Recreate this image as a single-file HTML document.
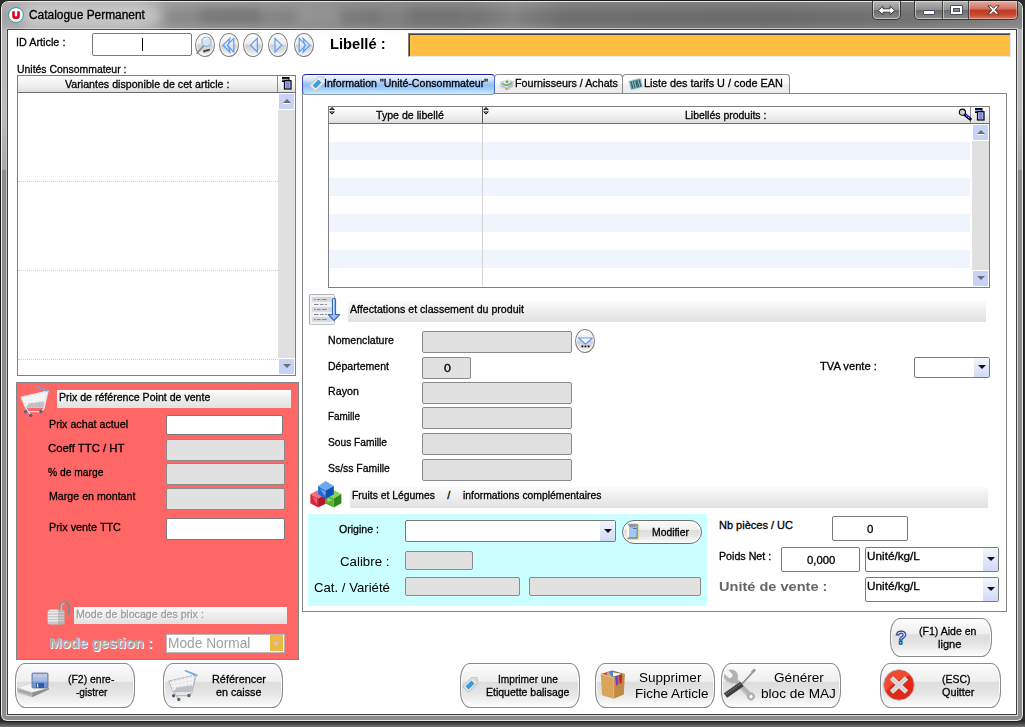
<!DOCTYPE html>
<html lang="fr">
<head>
<meta charset="utf-8">
<title>Catalogue Permanent</title>
<style>
html,body{margin:0;padding:0}
body{width:1025px;height:727px;overflow:hidden;position:relative;background:linear-gradient(#2c2c2c 0,#2c2c2c 721px,#343434 722px,#747474 727px);font-family:"Liberation Sans",sans-serif;font-size:11px;color:#000}
.a{position:absolute;box-sizing:border-box}
.t{position:absolute;white-space:nowrap;font-family:"Liberation Sans",sans-serif;font-size:11px;transform-origin:0 0;-webkit-text-stroke:.3px currentColor}
#win{left:0;top:0;width:1024px;height:722px;border:1px solid #1c1c1c;border-radius:8px 8px 7px 7px;background:#8d8d8d;box-shadow:inset 0 0 0 1px #e9e9e9}
#cap{left:2px;top:2px;width:1020px;height:27px;border-radius:6px 6px 0 0;background:linear-gradient(97deg,#a6a6a6 0,#a2a2a2 13%,#8c8c8c 17%,#848484 30%,#7a7a7a 36%,#747474 46%,#838383 50%,#6f6f6f 55%,#6b6b6b 75%,#747474 90%,#838383 100%)}
#capg{left:2px;top:2px;width:1020px;height:27px;border-radius:6px 6px 0 0;background:linear-gradient(rgba(255,255,255,.14),rgba(255,255,255,0) 45%,rgba(255,255,255,0) 70%,rgba(255,255,255,.10))}
.fl{position:absolute;top:29px;width:4px;height:141px;background:linear-gradient(#b8b8b8,#bcbcbc 60%,#a8a8a8)}
#cli{left:6px;top:28px;width:1012px;height:688px;border:1px solid #cfcfcf;border-color:#c8c8c8 #dcdcdc #dcdcdc #c8c8c8;background:#fff;box-shadow:inset 0 0 0 1px #3f3f3f}
.in{position:absolute;box-sizing:border-box;background:#e1e1e1;border:1px solid #8a8a8a;border-radius:2px}
.iw{position:absolute;box-sizing:border-box;background:#fff;border:1px solid #7a7a7a;border-radius:2px}
.bar{position:absolute;box-sizing:border-box;background:linear-gradient(#fbfbfb,#ededed 50%,#e1e1e1)}
.btn{position:absolute;box-sizing:border-box;border:1px solid #8a8a8a;border-radius:10px/16px;background:linear-gradient(#fcfcfc 0,#efefef 40%,#dddddd 43%,#e6e6e6 70%,#fdfdfd 100%);box-shadow:inset 0 0 0 1px rgba(255,255,255,.85)}
.rb{position:absolute;box-sizing:border-box;border:1px solid #7d7d7d;border-radius:50%;background:radial-gradient(ellipse at 50% 50%,rgba(255,255,255,0) 55%,rgba(0,0,0,.10) 100%),linear-gradient(#fdfdfd 0,#ececec 46%,#cdcdcd 50%,#dadada 70%,#fbfbfb 100%);box-shadow:inset 0 0 0 1px rgba(255,255,255,.9)}
.hd{position:absolute;box-sizing:border-box;background:linear-gradient(#ffffff,#f1f1f1 55%,#dedede)}
.sb{position:absolute;box-sizing:border-box;background:#e0e0e0}
.sa{position:absolute;box-sizing:border-box;background:#c6d3f7}
.cb{position:absolute;box-sizing:border-box;background:#fff;border:1px solid #7a7a7a;border-radius:2px}
.cbb{position:absolute;box-sizing:border-box;background:linear-gradient(#f4f6fd,#cfdaf6)}
.tri{position:absolute;width:0;height:0;border-left:4px solid transparent;border-right:4px solid transparent;border-top:4px solid #111}
.ln{position:absolute;background:#7f7f7f}
svg{position:absolute;overflow:visible}
</style>
</head>
<body>
<!-- window frame -->
<div id="win" class="a"></div>
<div id="cap" class="a"></div>
<div id="capg" class="a"></div>
<div class="fl" style="left:2px"></div>
<div class="fl" style="left:1018px"></div>
<div id="cli" class="a"></div>
<!-- title bar -->
<div class="a" style="left:200px;top:9px;width:60px;height:14px;background:#6c6c6c;opacity:.55;filter:blur(4px)"></div>
<div class="a" style="left:296px;top:6px;width:44px;height:20px;background:#a2a2a2;opacity:.5;filter:blur(4px)"></div>
<div class="a" style="left:408px;top:9px;width:56px;height:14px;background:#565656;opacity:.55;filter:blur(4px)"></div>
<div class="a" style="left:380px;top:4px;width:90px;height:22px;background:#909090;opacity:.35;filter:blur(5px)"></div>
<div class="a" style="left:22px;top:5px;width:140px;height:22px;border-radius:11px;background:rgba(255,255,255,.42);filter:blur(6px)"></div>
<svg style="left:8px;top:7px" width="16" height="16" viewBox="0 0 16 16"><circle cx="8" cy="8" r="7.400" fill="#fff" stroke="#2a9aa6" stroke-width="1"/><path d="M4.200 4.300h2.600v4.200c0 .8.500 1.200 1.200 1.200s1.200-.4 1.200-1.200V4.300h2.600v4.600c0 2.100-1.500 3.200-3.800 3.200s-3.800-1.100-3.800-3.200z" fill="#e2001a"/></svg>
<span class="t" style="left:28.8px;top:8px;line-height:14px;font-size:12px;transform:scaleX(0.993)">Catalogue Permanent</span>
<!-- caption buttons -->
<div class="a" style="left:872px;top:1px;width:29px;height:19px;border:1px solid #3a3a3a;border-top:none;border-radius:0 0 5px 5px;background:linear-gradient(#b6b6b6,#8f8f8f 48%,#6c6c6c 52%,#8c8c8c);box-shadow:inset 0 0 0 1px rgba(255,255,255,.5)"></div>
<svg style="left:877px;top:5px" width="19" height="11" viewBox="0 0 19 11"><path d="M1.200 5.500l4.800-4.300v2.600h7v-2.600l4.800 4.300-4.800 4.300v-2.600h-7v2.600z" fill="#fff" stroke="#3c3c3c" stroke-width="1" stroke-linejoin="round"/></svg>
<div class="a" style="left:914px;top:1px;width:104px;height:19px;border:1px solid #3a3a3a;border-top:none;border-radius:0 0 5px 5px;background:linear-gradient(#b6b6b6,#8f8f8f 48%,#6c6c6c 52%,#8c8c8c);box-shadow:inset 0 0 0 1px rgba(255,255,255,.5)"></div>
<div class="a" style="left:969px;top:1px;width:48px;height:18px;border-radius:0 0 4px 0;background:linear-gradient(#e3aca2,#d0705f 45%,#bb3b25 50%,#ca4830 78%,#de7a62);box-shadow:inset 0 0 0 1px rgba(255,255,255,.35)"></div>
<div class="a" style="left:942px;top:1px;width:1px;height:18px;background:#444"></div>
<div class="a" style="left:943px;top:1px;width:1px;height:18px;background:rgba(255,255,255,.45)"></div>
<div class="a" style="left:968px;top:1px;width:1px;height:18px;background:#444"></div>
<div class="a" style="left:923px;top:10px;width:12px;height:5px;background:#fff;border:1px solid #454c5c;border-radius:1px"></div>
<div class="a" style="left:950px;top:5px;width:13px;height:10px;background:#fff;border:1px solid #454c5c;border-radius:1px"></div>
<div class="a" style="left:953px;top:8px;width:7px;height:4px;background:#8a8a8a;border:1px solid #454c5c"></div>
<svg style="left:987px;top:5px" width="13" height="10" viewBox="0 0 13 10"><path d="M1 .8h3.200l2.300 2.500 2.300-2.500h3.200l-3.700 4.200 3.700 4.200h-3.200l-2.300-2.500-2.300 2.500h-3.200l3.700-4.200z" fill="#fff" stroke="#4a3030" stroke-width=".9" stroke-linejoin="round"/></svg>

<!-- top row -->
<span class="t" style="left:15.8px;top:36px;line-height:12px;transform:scaleX(0.986)">ID Article :</span>
<div class="iw" style="left:92px;top:33px;width:100px;height:23px"></div>
<div class="a" style="left:142px;top:38px;width:1px;height:13px;background:#000"></div>
<div class="rb" style="left:195px;top:33px;width:20px;height:24px"></div>
<div class="rb" style="left:219px;top:33px;width:20px;height:24px"></div>
<div class="rb" style="left:243px;top:33px;width:20px;height:24px"></div>
<div class="rb" style="left:268px;top:33px;width:20px;height:24px"></div>
<div class="rb" style="left:294px;top:33px;width:20px;height:24px"></div>
<svg style="left:190px;top:30px" width="130" height="30" viewBox="190 30 130 30"><g fill="rgba(235,243,254,.55)" stroke="#5a9cf4" stroke-width="1.200" stroke-linejoin="miter"><path d="M257.300 38.400 250.500 45.200 257.300 52z"/><path d="M275 38.400 281.800 45.200 275 52z"/><path d="M229.800 38.400 223.200 45.200 229.800 52 228.300 45.200z"/><path d="M233.800 38.400 227.200 45.200 233.800 52z"/><path d="M303.200 38.400 309.800 45.200 303.200 52 304.700 45.200z"/><path d="M299.200 38.400 305.800 45.200 299.200 52z"/></g><path d="M203.500 46 197.200 53.200" stroke="#8e8e8e" stroke-width="1.800" stroke-linecap="round"/><circle cx="206.500" cy="41.800" r="4.600" fill="#cfe6f6" stroke="#9fb4c4" stroke-width="1.200"/><path d="M203.500 40.500a3.200 3.200 0 0 1 4.500-2" fill="none" stroke="#f4fbff" stroke-width="1.100"/><path d="M202.800 50.500 209.500 48.800 210.300 50.300 203.800 52.300z" fill="#3a3a3a"/><path d="M203 52.800l6.500-1.800" stroke="#9a9a9a" stroke-width=".8"/></svg>
<span class="t" style="left:330.1px;top:36px;line-height:16px;font-size:14.67px;-webkit-text-stroke:0;font-weight:bold;transform:scaleX(1.004)">Libellé :</span>
<div class="a" style="left:408px;top:33px;width:603px;height:24px;background:#ffbf40;border:1px solid #7d7d7d;border-right-color:#e3e6ee;border-bottom-color:#e3e6ee;box-shadow:inset 1px 1px 0 #3d4149"></div>

<!-- left list -->
<span class="t" style="left:16.8px;top:63px;line-height:12px;transform:scaleX(0.947)">Unités Consommateur :</span>
<div class="a" style="left:17px;top:75px;width:279px;height:301px;background:#fff;border:1px solid #7f7f7f"></div>
<div class="hd" style="left:18px;top:76px;width:277px;height:16px"></div>
<div class="ln" style="left:18px;top:92px;width:277px;height:1px;background:#6e6e6e"></div>
<div class="ln" style="left:277px;top:76px;width:1px;height:16px;background:#8c8c8c"></div>
<span class="t" style="left:64.8px;top:78px;line-height:12px;transform:scaleX(0.968)">Variantes disponible de cet article :</span>
<svg style="left:280.500px;top:77px" width="11" height="13" viewBox="0 0 11 13"><rect x="1" y="0" width="7.500" height="5" fill="#000"/><rect x="1" y="1.800" width="6.500" height="1.700" fill="#8fa0f0"/><rect x="3.500" y="3.700" width="6.500" height="8.300" fill="#b8c6fb" stroke="#000" stroke-width="1.200"/><path d="M5 6h3.500M5 8h3.500M5 10h3.500" stroke="#5048c0" stroke-width="1"/></svg>
<div class="sb" style="left:278px;top:110px;width:17px;height:248px"></div>
<div class="sa" style="left:279px;top:94px;width:15px;height:15px"></div>
<div class="tri" style="left:282.500px;top:99px;border-top:none;border-bottom:4px solid #6e6e6e"></div><div class="a" style="left:283px;top:103px;width:7px;height:1px;background:#fff"></div>
<div class="sa" style="left:279px;top:359px;width:15px;height:15px"></div>
<div class="tri" style="left:282.500px;top:364px;border-top-color:#6e6e6e"></div>
<div class="a" style="left:18px;top:181px;width:260px;height:0;border-top:1px dotted #cfcfcf"></div>
<div class="a" style="left:18px;top:270px;width:260px;height:0;border-top:1px dotted #cfcfcf"></div>
<div class="a" style="left:18px;top:359px;width:260px;height:0;border-top:1px dotted #cfcfcf"></div>

<!-- red panel -->
<div class="a" style="left:16px;top:382px;width:283px;height:278px;background:#ff6666;border:1px solid #7e8787"></div>
<div class="bar" style="left:57px;top:390px;width:234px;height:18px"></div>
<span class="t" style="left:59.3px;top:391px;line-height:12px;transform:scaleX(0.963)">Prix de référence Point de vente</span>
<span class="t" style="left:49px;top:418px;line-height:12px;transform:scaleX(0.973)">Prix achat actuel</span>
<div class="iw" style="left:166px;top:415px;width:117px;height:20px"></div>
<span class="t" style="left:48.3px;top:442px;line-height:12px;transform:scaleX(1.030)">Coeff TTC / HT</span>
<div class="in" style="left:166px;top:439px;width:119px;height:22px"></div>
<span class="t" style="left:48.3px;top:466px;line-height:12px;transform:scaleX(0.934)">% de marge</span>
<div class="in" style="left:166px;top:463px;width:119px;height:22px"></div>
<span class="t" style="left:48.8px;top:490px;line-height:12px;transform:scaleX(0.968)">Marge en montant</span>
<div class="in" style="left:166px;top:488px;width:119px;height:22px"></div>
<span class="t" style="left:48.8px;top:521px;line-height:12px;transform:scaleX(0.983)">Prix vente TTC</span>
<div class="iw" style="left:166px;top:518px;width:119px;height:22px"></div>
<div class="bar" style="left:74px;top:607px;width:213px;height:17px"></div>
<span class="t" style="left:76.3px;top:608px;line-height:12px;color:#9d9d9d;transform:scaleX(0.968);text-shadow:1px 1px 0 #fff">Mode de blocage des prix :</span>
<span class="t" style="left:49.3px;top:635px;line-height:16px;font-size:14.67px;-webkit-text-stroke:0;font-weight:bold;color:#a9a9a9;text-shadow:1px 1px 0 #fff">Mode gestion :</span>
<div class="iw" style="left:166px;top:634px;width:119px;height:19px;border-color:#b9b9b9;border-radius:0"></div>
<span class="t" style="left:167.8px;top:635px;line-height:16px;font-size:14.67px;-webkit-text-stroke:0;color:#a0a0a0;transform:scaleX(0.937)">Mode Normal</span>
<div class="a" style="left:270px;top:635px;width:13px;height:16px;background:#f0b840"></div>
<div class="tri" style="left:273px;top:642px;border-top-color:#c9c9c9;border-left-width:3.500px;border-right-width:3.500px"></div>


<!-- bottom-left buttons -->
<div class="btn" style="left:15px;top:663px;width:120px;height:45px"></div>
<span class="t" style="left:68.3px;top:673px;line-height:12px;transform:scaleX(0.949)">(F2) enre-</span>
<span class="t" style="left:75.8px;top:686px;line-height:12px;transform:scaleX(0.917)">-gistrer</span>
<div class="btn" style="left:163px;top:663px;width:120px;height:45px"></div>
<span class="t" style="left:211.8px;top:673px;line-height:12px;transform:scaleX(0.990)">Référencer</span>
<span class="t" style="left:216.3px;top:686px;line-height:12px;transform:scaleX(0.977)">en caisse</span>
<!-- tabs -->
<div class="a" style="left:302px;top:93px;width:705px;height:519px;background:#fff;border:1px solid #868686"></div>
<div class="a" style="left:494px;top:74px;width:129px;height:19px;border:1px solid #8c8c8c;border-bottom:none;border-radius:4px 4px 0 0;background:linear-gradient(#ffffff,#fbfbfb 45%,#efefef 55%,#ebebeb)"></div>
<div class="a" style="left:622px;top:74px;width:168px;height:19px;border:1px solid #8c8c8c;border-bottom:none;border-radius:4px 4px 0 0;background:linear-gradient(#ffffff,#fbfbfb 45%,#efefef 55%,#ebebeb)"></div>
<div class="a" style="left:302px;top:74px;width:193px;height:21px;border:1px solid;border-color:#1c1c9a #4a6ad0 #8c99aa #3a4ac0;border-top-width:1.500px;border-radius:4px;background:linear-gradient(#f4f8ff 0,#d3e4fb 25%,#9dc4f7 47%,#92bff7 56%,#a9d2fa 78%,#c9efff 100%);box-shadow:inset 0 1px 0 rgba(255,255,255,.7)"></div>
<span class="t" style="left:324.3px;top:77px;line-height:12px;transform:scaleX(0.962)">Information "Unité-Consommateur"</span>
<span class="t" style="left:515.3px;top:77px;line-height:12px;transform:scaleX(0.973)">Fournisseurs / Achats</span>
<span class="t" style="left:643.8px;top:77px;line-height:12px;transform:scaleX(0.988)">Liste des tarifs U / code EAN</span>


<!-- grid -->
<div class="a" style="left:328px;top:106px;width:662px;height:182px;background:#fff;border:1px solid #7f7f7f"></div>
<div class="a" style="left:329px;top:142px;width:641px;height:18px;background:#f0f4fd"></div>
<div class="a" style="left:329px;top:178px;width:641px;height:18px;background:#f0f4fd"></div>
<div class="a" style="left:329px;top:214px;width:641px;height:18px;background:#f0f4fd"></div>
<div class="a" style="left:329px;top:250px;width:641px;height:18px;background:#f0f4fd"></div>
<div class="ln" style="left:482px;top:124px;width:1px;height:162px;background:#d4d4d4"></div>
<div class="hd" style="left:329px;top:107px;width:660px;height:16px"></div>
<div class="ln" style="left:329px;top:123px;width:660px;height:1px;background:#6e6e6e"></div>
<div class="ln" style="left:482px;top:107px;width:1px;height:16px;background:#5a5a5a"></div>
<div class="ln" style="left:970px;top:107px;width:1px;height:16px;background:#8c8c8c"></div>
<span class="t" style="left:376.3px;top:109px;line-height:12px;transform:scaleX(0.965)">Type de libellé</span>
<span class="t" style="left:684.8px;top:109px;line-height:12px;transform:scaleX(0.951)">Libellés produits :</span>
<div class="sb" style="left:972px;top:141px;width:17px;height:129px"></div>
<div class="sa" style="left:973px;top:125px;width:15px;height:15px"></div>
<div class="tri" style="left:976.500px;top:130px;border-top:none;border-bottom:4px solid #6e6e6e"></div><div class="a" style="left:977px;top:134px;width:7px;height:1px;background:#fff"></div>
<div class="sa" style="left:973px;top:271px;width:15px;height:15px"></div>
<div class="tri" style="left:976.500px;top:276px;border-top-color:#6e6e6e"></div>


<!-- section 1 -->
<div class="bar" style="left:348px;top:301px;width:638px;height:21px"></div>
<span class="t" style="left:349.8px;top:303px;line-height:12px;transform:scaleX(0.965)">Affectations et classement du produit</span>
<span class="t" style="left:328.1px;top:334px;line-height:12px;transform:scaleX(0.962)">Nomenclature</span>
<div class="in" style="left:422px;top:331px;width:150px;height:22px"></div>
<div class="rb" style="left:575px;top:329px;width:20px;height:24px"></div>
<span class="t" style="left:328.1px;top:360px;line-height:12px;transform:scaleX(0.958)">Département</span>
<div class="in" style="left:422px;top:357px;width:49px;height:22px"></div>
<span class="t" style="left:443.6px;top:362px;line-height:12px;transform:scaleX(1.127)">0</span>
<span class="t" style="left:328.1px;top:385px;line-height:12px;transform:scaleX(0.972)">Rayon</span>
<div class="in" style="left:422px;top:382px;width:150px;height:22px"></div>
<span class="t" style="left:328.1px;top:410px;line-height:12px;transform:scaleX(0.903)">Famille</span>
<div class="in" style="left:422px;top:407px;width:150px;height:22px"></div>
<span class="t" style="left:328.1px;top:436px;line-height:12px;transform:scaleX(0.928)">Sous Famille</span>
<div class="in" style="left:422px;top:433px;width:150px;height:22px"></div>
<span class="t" style="left:328.1px;top:462px;line-height:12px;transform:scaleX(0.946)">Ss/ss Famille</span>
<div class="in" style="left:422px;top:459px;width:150px;height:22px"></div>
<span class="t" style="left:820.3px;top:360px;line-height:12px;transform:scaleX(1.015)">TVA vente :</span>
<div class="cb" style="left:914px;top:357px;width:76px;height:21px"></div>
<div class="cbb" style="left:974px;top:358px;width:15px;height:19px"></div>
<div class="tri" style="left:978px;top:365px"></div>

<!-- section 2 -->
<div class="bar" style="left:350px;top:487px;width:638px;height:21px"></div>
<span class="t" style="left:352.1px;top:489px;line-height:12px;transform:scaleX(0.942)">Fruits et Légumes</span>
<span class="t" style="left:447.3px;top:489px;line-height:12px">/</span>
<span class="t" style="left:463.3px;top:489px;line-height:12px;transform:scaleX(0.943)">informations complémentaires</span>
<div class="a" style="left:308px;top:514px;width:399px;height:92px;background:#ccffff"></div>
<span class="t" style="left:339.3px;top:523px;line-height:12px;transform:scaleX(0.960)">Origine :</span>
<div class="cb" style="left:405px;top:520px;width:211px;height:22px"></div>
<div class="cbb" style="left:600px;top:521px;width:15px;height:20px"></div>
<div class="tri" style="left:603.500px;top:529px"></div>
<div class="btn" style="left:622px;top:520px;width:80px;height:24px;border-radius:12px;border-color:#6f6f6f"></div>
<span class="t" style="left:652.3px;top:526px;line-height:12px;transform:scaleX(0.943)">Modifier</span>
<span class="t" style="left:340.1px;top:554px;line-height:15px;font-size:13.33px;-webkit-text-stroke:0;transform:scaleX(0.995)">Calibre :</span>
<div class="in" style="left:405px;top:551px;width:68px;height:19px"></div>
<span class="t" style="left:314.1px;top:580px;line-height:15px;font-size:13.33px;-webkit-text-stroke:0;transform:scaleX(0.988)">Cat. / Variété</span>
<div class="in" style="left:405px;top:577px;width:115px;height:19px"></div>
<div class="in" style="left:529px;top:577px;width:172px;height:19px"></div>
<span class="t" style="left:719px;top:519px;line-height:12px">Nb pièces / UC</span>
<div class="iw" style="left:832px;top:516px;width:76px;height:25px"></div>
<span class="t" style="left:866.8px;top:523px;line-height:12px;transform:scaleX(1.045)">0</span>
<span class="t" style="left:719px;top:550px;line-height:12px;transform:scaleX(0.970)">Poids Net :</span>
<div class="iw" style="left:781px;top:547px;width:79px;height:25px"></div>
<span class="t" style="left:806.5px;top:554px;line-height:12px;transform:scaleX(1.032)">0,000</span>
<div class="cb" style="left:865px;top:547px;width:134px;height:25px"></div>
<div class="cbb" style="left:983px;top:548px;width:15px;height:23px"></div>
<div class="tri" style="left:986.500px;top:557px"></div>
<span class="t" style="left:867.3px;top:550px;line-height:12px;transform:scaleX(1.068)">Unité/kg/L</span>
<span class="t" style="left:719.3px;top:579px;line-height:15px;font-size:13.33px;-webkit-text-stroke:0;font-weight:bold;color:#676767;transform:scaleX(1.092)">Unité de vente :</span>
<div class="cb" style="left:865px;top:577px;width:134px;height:25px"></div>
<div class="cbb" style="left:983px;top:578px;width:15px;height:23px"></div>
<div class="tri" style="left:986.500px;top:587px"></div>
<span class="t" style="left:867.3px;top:580px;line-height:12px;transform:scaleX(1.068)">Unité/kg/L</span>

<!-- right/bottom buttons -->
<div class="btn" style="left:890px;top:618px;width:102px;height:39px"></div>
<span class="t" style="left:919.3px;top:625px;line-height:12px;transform:scaleX(0.958)">(F1) Aide en</span>
<span class="t" style="left:937.8px;top:638px;line-height:12px;transform:scaleX(1.006)">ligne</span>
<div class="btn" style="left:460px;top:663px;width:120px;height:45px"></div>
<span class="t" style="left:498.3px;top:673px;line-height:12px;transform:scaleX(0.924)">Imprimer une</span>
<span class="t" style="left:486.3px;top:686px;line-height:12px;transform:scaleX(0.954)">Etiquette balisage</span>
<div class="btn" style="left:595px;top:663px;width:120px;height:45px"></div>
<span class="t" style="left:638.8px;top:670px;line-height:15px;font-size:13.33px;-webkit-text-stroke:0;transform:scaleX(1.015)">Supprimer</span>
<span class="t" style="left:634.8px;top:686px;line-height:15px;font-size:13.33px;-webkit-text-stroke:0;transform:scaleX(1.011)">Fiche Article</span>
<div class="btn" style="left:721px;top:663px;width:120px;height:45px"></div>
<span class="t" style="left:773.8px;top:670px;line-height:15px;font-size:13.33px;-webkit-text-stroke:0;transform:scaleX(1.020)">Générer</span>
<span class="t" style="left:761.3px;top:686px;line-height:15px;font-size:13.33px;-webkit-text-stroke:0;transform:scaleX(1.021)">bloc de MAJ</span>
<div class="btn" style="left:880px;top:663px;width:121px;height:45px"></div>
<span class="t" style="left:941.6px;top:673px;line-height:12px;transform:scaleX(0.948)">(ESC)</span>
<span class="t" style="left:941.6px;top:686px;line-height:12px;transform:scaleX(0.981)">Quitter</span>
<!-- cart icon (panel) -->
<svg style="left:19px;top:384px" width="32" height="36" viewBox="0 0 32 36"><g fill="none" stroke-linecap="round" stroke-linejoin="round"><path d="M2.200 13 29 6.800 24.500 23.200 6.600 23.700z" fill="#eeeff2" stroke="#d4d7dc" stroke-width="1"/><path d="M6 12.200l3.300 11.500M10 11.300l2.600 12.300M14 10.300l2 13.300M18 9.400l1.300 13.800M22 8.500l.5 14.700M25.500 7.700l-.8 15.500M3.300 15.700l24.800-5.700M4.300 18.500l23-4.600M5.300 21.200l21-3.500" stroke="#fbfbfc" stroke-width=".8"/><path d="M9.500 19.500 25.300 17.200 24.500 23.200 6.600 23.700z" fill="#a9adb6" stroke="none" opacity=".7"/><path d="M18.500 2.800 29.800 7.400" stroke="#6aa8ea" stroke-width="1.700"/><path d="M29 7 25 24.500l-2.800 3.200M6.600 23.700l2.600 3.800 13 .2M9.200 27.500l2.400 3.500" stroke="#e4e6ea" stroke-width="1.200"/></g><circle cx="6.600" cy="27.800" r="1.700" fill="#5a6076"/><circle cx="11.800" cy="31.500" r="1.700" fill="#5a6076"/><circle cx="21.900" cy="27.500" r="1.700" fill="#5a6076"/></svg>
<!-- lock icon -->
<svg style="left:46px;top:600px" width="26" height="26" viewBox="0 0 26 26"><path d="M14.500 11V6.500a4.200 4.200 0 0 1 8.400 0V14" fill="none" stroke="#868b8d" stroke-width="2.600" stroke-linecap="round"/><path d="M15.300 10.500V6.500a3.400 3.400 0 0 1 3.400-3.400" fill="none" stroke="#d5d7d8" stroke-width=".9"/><rect x="1.500" y="9.800" width="17" height="14.800" rx="2.500" fill="#c9c9c9"/><path d="M2 12.500h16M2 15.300h16M2 18.100h16M2 20.900h16" stroke="#efefef" stroke-width="1.300"/><path d="M12 10v14.500h4a2.500 2.500 0 0 0 2.500-2.500V12.300A2.500 2.500 0 0 0 16 10z" fill="#8d8d8d" opacity=".35"/><path d="M3.500 10.300h8" stroke="#f6f6f6" stroke-width="1.200"/></svg>
<!-- floppy/drive icon -->
<svg style="left:16px;top:671px" width="36" height="28" viewBox="0 0 36 28"><path d="M1.200 16.700 16 12l17 5L16.200 21.500z" fill="#f3f3f3" stroke="#d2d2d2" stroke-width=".6"/><path d="M1.200 16.700 16.200 21.500v4.700L1.200 21.600z" fill="#bababa"/><path d="M16.200 21.500 33 17v1.600L16.200 26.200z" fill="#8f8f8f"/><path d="M3 18.600l10 3.100v1.400L3 20z" fill="#9c9c9c"/><rect x="13.600" y="22.300" width="1.200" height="1.200" fill="#58b040"/><rect x="16" y="2" width="16" height="15" rx="1" fill="#6f94d6" stroke="#6b7080" stroke-width=".8"/><rect x="16.800" y="2.800" width="14.400" height="8" fill="#b9c9ea"/><path d="M16.800 6.500h14.400v4.300h-14.400z" fill="#9db4e2" opacity=".7"/><rect x="20" y="12" width="8" height="5" fill="#2d5ba8"/><rect x="21" y="12.600" width="1.200" height="3.800" fill="#dfe8f8"/><path d="M16.800 10.800h14.400" stroke="#88a6dc" stroke-width="1"/></svg>
<!-- cart icon (button) -->
<svg style="left:166.500px;top:667.500px" width="32" height="36" viewBox="0 0 32 36"><g fill="none" stroke-linecap="round" stroke-linejoin="round"><path d="M2.200 13 29 6.800 24.500 23.200 6.600 23.700z" fill="#e6e7ea" stroke="#b4b7bd" stroke-width="1"/><path d="M6 12.200l3.300 11.500M10 11.300l2.600 12.300M14 10.300l2 13.300M18 9.400l1.300 13.800M22 8.500l.5 14.700M25.500 7.700l-.8 15.500M3.300 15.700l24.800-5.700M4.300 18.500l23-4.600M5.300 21.200l21-3.500" stroke="#fafafa" stroke-width=".8"/><path d="M9.500 19.500 25.300 17.200 24.500 23.200 6.600 23.700z" fill="#a9adb6" stroke="none" opacity=".7"/><path d="M18.500 2.800 29.800 7.400" stroke="#6aa8ea" stroke-width="1.700"/><path d="M29 7 25 24.500l-2.800 3.200M6.600 23.700l2.600 3.800 13 .2M9.200 27.500l2.400 3.500" stroke="#b9bcc2" stroke-width="1.200"/></g><circle cx="6.600" cy="27.800" r="1.700" fill="#5a6076"/><circle cx="11.800" cy="31.500" r="1.700" fill="#5a6076"/><circle cx="21.900" cy="27.500" r="1.700" fill="#5a6076"/></svg>
<!-- tab icons -->
<svg style="left:308.800px;top:71.800px" width="20" height="20" viewBox="0 0 18 18"><g transform="rotate(-45 9 9)"><path d="M1 5.500h11.500l3 3.500-3 3.500H1z" fill="#f3f3f3" stroke="#cfcfcf" stroke-width="1" stroke-linejoin="round"/><rect x="2.700" y="7" width="7.600" height="4" fill="#3aa0dc"/><circle cx="12.800" cy="9" r="1.100" fill="#fff" stroke="#bdbdbd" stroke-width=".6"/></g></svg>
<svg style="left:499px;top:78px" width="15" height="13" viewBox="0 0 15 13"><path d="M1 9.500 8 12.500 14.500 8.500V3L8 1 1 4z" fill="#e4e6ea"/><path d="M8 6.500 14.500 3v5.500L8 12.500z" fill="#c4c8cf"/><path d="M1 4l7 2.500v6L1 9.500z" fill="#dadee6"/><path d="M3 5.500c2 1.500 3.500 2 5.500 1.500s3.500-1.500 4.500-3" fill="none" stroke="#6aa84a" stroke-width="1.600" opacity=".85"/><circle cx="8" cy="3.800" r="1.300" fill="#5a9c40" opacity=".9"/><path d="M2 8l5 1.800M9.500 9.500 13.500 7.500" stroke="#8fbfea" stroke-width="1.200"/><rect x="6.700" y="10" width="1.600" height="1.600" fill="#c98a2a"/><path d="M2 3.800v3M4 3v3M12 2.500v3" stroke="#9fc6d8" stroke-width=".8"/></svg>
<svg style="left:628px;top:77px" width="15" height="14" viewBox="0 0 15 14"><g transform="rotate(-14 7.500 7)"><rect x="1.500" y="2.500" width="12.500" height="9.500" rx="1" fill="#5f9aa6" stroke="#cfe6ea" stroke-width="1"/><path d="M4 4v6.500M6 4v6.500M8.500 4v6.500M10 4v6.500M12 4v6.500" stroke="#2f5e68" stroke-width="1.100"/><path d="M5 4v6.500M7.200 4v6.500M11 4v6.500" stroke="#9cc4cc" stroke-width=".7"/></g></svg>
<!-- grid header icons -->
<svg style="left:329px;top:107px" width="6" height="8" viewBox="0 0 6 8"><path d="M3 0 6 3H0zM0 4.500h6L3 7.500z" fill="#000"/><rect x="2.500" y="1.500" width="1" height="1" fill="#fff"/><rect x="2.500" y="5" width="1" height="1" fill="#fff"/></svg>
<svg style="left:483px;top:107px" width="6" height="8" viewBox="0 0 6 8"><path d="M3 0 6 3H0zM0 4.500h6L3 7.500z" fill="#000"/><rect x="2.500" y="1.500" width="1" height="1" fill="#fff"/><rect x="2.500" y="5" width="1" height="1" fill="#fff"/></svg>
<svg style="left:958px;top:108px" width="13" height="13" viewBox="0 0 13 13"><path d="M6.500 6.500 12 11" stroke="#000" stroke-width="3" stroke-linecap="square"/><path d="M7 6 12.300 10.300" stroke="#1a1aff" stroke-width="1.800"/><path d="M8.300 7.600l.8.700M10.200 9.200l.8.700" stroke="#fff" stroke-width=".9"/><circle cx="4.400" cy="4.200" r="3.100" fill="#c9c9c9" stroke="#000" stroke-width="1.100"/><path d="M4.800 2.500 6 4.200 4.800 5.800z" fill="#efefef"/></svg>
<svg style="left:974px;top:108px" width="11" height="13" viewBox="0 0 11 13"><rect x="1" y="0" width="7.500" height="5" fill="#000"/><rect x="1" y="1.800" width="6.500" height="1.700" fill="#8fa0f0"/><rect x="3.500" y="3.700" width="6.500" height="8.300" fill="#b8c6fb" stroke="#000" stroke-width="1.200"/><path d="M5 6h3.500M5 8h3.500M5 10h3.500" stroke="#5048c0" stroke-width="1"/></svg>
<!-- section icons -->
<svg style="left:308px;top:293px" width="34" height="33" viewBox="0 0 34 33"><rect x="1.500" y="1.500" width="25" height="30" rx="1" fill="#f3f3f3" stroke="#c4c4c4" stroke-width="1"/><path d="M1.500 2v29" stroke="#a9a9a9" stroke-width="1"/><path d="M2 1.500h24" stroke="#b4b4b4" stroke-width="1"/><rect x="4" y="4" width="20" height="4.800" fill="#d3d8e3"/><rect x="4" y="14" width="20" height="4.800" fill="#d3d8e3"/><rect x="4" y="24" width="20" height="4.800" fill="#d3d8e3"/><path d="M6 6.500h1.800M9 6.500h3.600M14 6.500h4.600M6 11.500h4.600M12 11.500h3.600M17 11.500h1.800M6 16.500h1.800M9 16.500h3.600M14 16.500h4.600M6 21.500h4.600M12 21.500h3.600M17 21.500h1.800M6 26.500h1.800M9 26.500h3.600M14 26.500h4.600" stroke="#8a8a8a" stroke-width="1"/><path d="M24.500 6.800a1.500 1.500 0 0 1 3 0V21.500h4.200L26 27.500l-5.700-6h4.200z" fill="#9dc0f0" stroke="#3a6db8" stroke-width="1.200" stroke-linejoin="round"/><path d="M25.600 6v15" stroke="#d4e4fb" stroke-width="1"/></svg>
<svg style="left:308px;top:479px" width="36" height="31" viewBox="0 0 36 31"><path d="M2.300 15 10.100 10.900 17.700 15 10.100 19.500z" fill="#f0707c"/><path d="M2.300 15 10.100 19.500v9.100L2.300 24.200z" fill="#d8283c"/><path d="M10.100 19.500 17.700 15v9.700l-7.600 3.900z" fill="#b81428"/><path d="M33.400 15 25.800 10.900 17.700 15 25.800 19.500z" fill="#8cd060"/><path d="M33.400 15 25.800 19.500v9.100l7.600-4.400z" fill="#2c8a1c"/><path d="M25.800 19.500 17.700 15v9.700l8.100 3.900z" fill="#58b030"/><path d="M10.100 6.900 17.700 2 25.800 6.900 17.700 11.500z" fill="#6aaaf4"/><path d="M10.100 6.900 17.700 11.500V20L10.100 15.300z" fill="#1f6cd8"/><path d="M17.700 11.500 25.800 6.900v8.400L17.700 20z" fill="#0c50b8"/><path d="M12 9.500l5.200 3.200v4.500z" fill="#9cc6fa" opacity=".7"/><path d="M4 17.300l5 3v4.600z" fill="#f49aa4" opacity=".6"/><path d="M24.500 21.300l-5-3v4.800z" fill="#b4e87c" opacity=".7"/></svg>
<!-- filter round button glyph -->
<svg style="left:574.500px;top:330px" width="21" height="24" viewBox="0 0 21 24"><path d="M3.500 8h14L10.500 14z" fill="#fff" stroke="#5a9cf4" stroke-width="1.200" stroke-linejoin="round"/><rect x="6.500" y="15.500" width="1.800" height="1.800" fill="#000"/><rect x="9.600" y="15.500" width="1.800" height="1.800" fill="#000"/><rect x="12.700" y="15.500" width="1.800" height="1.800" fill="#000"/></svg>
<!-- modifier icon -->
<svg style="left:626px;top:523px" width="14" height="18" viewBox="0 0 14 18"><path d="M2 1h10.500v15.500H2z" fill="#d8d040"/><path d="M1 1h10.500v14.500H1z" fill="#3a78c4"/><path d="M1 1h9.700v13.500H1z" fill="#a9c6f2"/><path d="M1 1h2v13.500H1z" fill="#fbfbf0"/><path d="M3 5h6" stroke="#dbe8fb" stroke-width="0"/><path d="M7 5.500h3.700" stroke="#3a78c4" stroke-width="1"/><path d="M1.500 .8h9.500L8.800 4.200H3.800z" fill="#9494a6"/></svg>
<!-- help icon -->
<svg style="left:893px;top:627px" width="16" height="20" viewBox="0 0 16 20"><text x="8" y="16.500" text-anchor="middle" font-family="Liberation Sans,sans-serif" font-weight="bold" font-size="18" fill="#fff" stroke="#234f9e" stroke-width="1.250" stroke-linejoin="round">?</text></svg>
<!-- tag icon -->
<svg style="left:462.200px;top:672.500px" width="20" height="20" viewBox="0 0 18 18"><g transform="rotate(-45 9 9)"><path d="M1 5.500h11.500l3 3.500-3 3.500H1z" fill="#ededed" stroke="#c4c4c4" stroke-width="1" stroke-linejoin="round"/><rect x="2.700" y="7" width="7.600" height="4" fill="#3a9cdc"/><circle cx="12.800" cy="9" r="1.100" fill="#fff" stroke="#b4b4b4" stroke-width=".6"/></g></svg>
<!-- box icon -->
<svg style="left:599px;top:669px" width="28" height="32" viewBox="0 0 28 32"><path d="M1.700 5.100 13.200 1.400 25.900 5.100 14.700 8.600z" fill="#8a6a30"/><path d="M4 5 7.500 3.800 9 6.500 5.500 6.300z" fill="#e04050"/><path d="M7.500 3.800 10 3l2 4.300-3 -.8z" fill="#d8a8b0"/><path d="M10.500 3 14 2l2 5.500-3.500.3z" fill="#4a90e0"/><path d="M14 3.200l8.500 1.500-6 2.800-2.500-.5z" fill="#f4f4f4"/><path d="M1.700 5.100 14.700 8.600V29.700L3.100 26.200z" fill="#d9a55c"/><path d="M14.700 8.600 25.900 5.100 24.800 25.600 14.700 29.700z" fill="#c08a44"/><path d="M1.700 5.100 14.700 8.600" stroke="#edc588" stroke-width="1"/><path d="M16.100 7.100l3.200-.5v8.100l-2 2.600z" fill="#7a38d0"/><path d="M19.900 6.300l2.900-.6v7.800l-2.100 1.700z" fill="#c82030"/><path d="M14.700 8.600V29.700" stroke="#e4b66e" stroke-width=".8"/></svg>
<!-- tools icon -->
<svg style="left:722px;top:667px" width="36" height="35" viewBox="0 0 36 35"><g transform="rotate(-45 9 9.500)"><path d="M9 2.500a7 7 0 1 0 .010 0zM6.400 2.700h5.200v5.300a2.600 2.600 0 0 1-5.200 0z" fill="#b2b2b2" fill-rule="evenodd"/><path d="M6.300 14.500h5.400v22a2.700 2.700 0 0 1-5.400 0z" fill="#b2b2b2"/><circle cx="9" cy="37.800" r="3.900" fill="#b2b2b2"/><circle cx="9" cy="37.800" r="1.600" fill="#fff"/><path d="M7.300 16v18" stroke="#d2d2d2" stroke-width="1"/><path d="M3.200 6.500a6 6 0 0 0 1 7" fill="none" stroke="#d8d8d8" stroke-width="1"/></g><path d="M20 17 32.500 3.200" stroke="#8c8c8c" stroke-width="1.600"/><path d="M30 5.500 33 2.300" stroke="#9a9a9a" stroke-width="2.600"/><path d="M3.500 28.500 20 17" stroke="#3c3c3c" stroke-width="5.600" stroke-linecap="butt"/><path d="M4.500 27 19.500 16" stroke="#7c7c7c" stroke-width="1.600" stroke-dasharray="1 1"/></svg>
<!-- quit icon -->
<svg style="left:883px;top:669px" width="32" height="32" viewBox="0 0 32 32"><circle cx="16" cy="16" r="15.300" fill="#e02a18" stroke="#b9c4d0" stroke-width=".9"/><path d="M1.500 16A14.500 14.500 0 0 1 27 6.500C20 8 8 14 3 23A14.500 14.500 0 0 1 1.500 16z" fill="#f4573a" opacity=".75"/><path d="M8.500 9 23.500 23M23.500 9 8.500 23" stroke="#e4e8ea" stroke-width="4.600" stroke-linecap="butt"/><path d="M8.500 9 23.500 23M23.500 9 8.500 23" stroke="#d4d4d4" stroke-width="2.400" stroke-linecap="butt"/></svg>

</body>
</html>
